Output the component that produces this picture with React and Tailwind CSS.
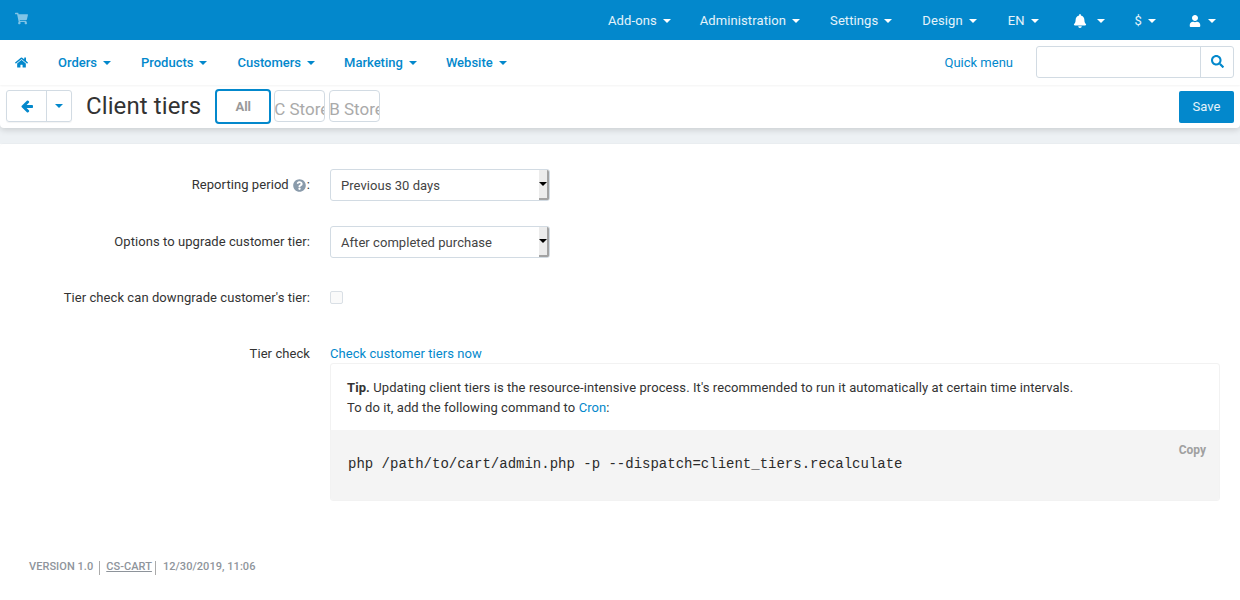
import React from "react";
import { FaShoppingCart, FaHome, FaBell, FaUser, FaSearch, FaQuestionCircle } from "react-icons/fa";

const Caret = ({ className = "" }) => (
  <span className={"inline-block w-0 h-0 border-x-[4px] border-x-transparent border-t-[4px] border-t-current " + className} />
);

const TopItem = ({ children, className = "" }) => (
  <span className={"flex items-center text-[13px] tracking-[0.1px] text-white/90 " + className}>{children}<Caret className="ml-[6px] text-white" /></span>
);

const NavItem = ({ children, className = "" }) => (
  <span className={"flex items-center text-[13px] font-medium text-[#0388cc] " + className}>{children}<Caret className="ml-[6px]" /></span>
);

const Select = ({ children }) => (
  <div className="w-[220px] h-[32px] border border-[#d2dbe3] rounded-[3px] bg-white flex items-center justify-between overflow-hidden">
    <span className="pl-[10px] pt-[1px] text-[13px] tracking-[0.05px] text-[#444]">{children}</span>
    <span className="w-[10px] h-full bg-[#ececec] border-r-2 border-b-2 border-[#a3a3a3] flex items-center justify-center">
      <Caret className="text-black border-x-[3px] border-t-[3px]" />
    </span>
  </div>
);

const Row = ({ label, children, className = "" }) => (
  <div className={"flex " + className}>
    <div className="w-[310px] text-right text-[13px] tracking-[0.07px] text-[#333] shrink-0">{label}</div>
    <div className="ml-[20px] flex-1">{children}</div>
  </div>
);

const ArrowLeft = () => (
  <svg viewBox="0 0 1792 1792" className="w-[14px] h-[14px] fill-[#0388cc]">
    <path d="M1664 896v128q0 53-32.5 90.5t-84.5 37.5h-704l293 294q38 36 38 90t-38 90l-75 76q-38 38-90 38-53 0-91-38l-651-652q-38-38-38-90 0-53 38-91l651-650q38-38 91-38 52 0 90 38l75 74q38 38 38 91t-38 91l-293 293h704q52 0 84.5 37.5t32.5 90.5z" />
  </svg>
);

export default function App() {
  return (
    <div className="w-[1240px] h-[600px] overflow-hidden bg-white text-[13px] text-[#333] font-['Roboto',sans-serif]">
      <header className="h-[40px] bg-[#0388cc] flex items-center pl-[15px] pr-[24px]">
        <FaShoppingCart className="text-white/50 text-[13px] -mt-[3px]" />
        <div className="ml-auto mt-[1px] flex items-center">
          <TopItem>Add-ons</TopItem>
          <TopItem className="ml-[29px]">Administration</TopItem>
          <TopItem className="ml-[30px]">Settings</TopItem>
          <TopItem className="ml-[30px]">Design</TopItem>
          <TopItem className="ml-[31px]">EN</TopItem>
          <TopItem className="ml-[34px]"><FaBell className="text-white text-[14px] mr-[4px]" /></TopItem>
          <TopItem className="ml-[30px]">$</TopItem>
          <TopItem className="ml-[33px]"><FaUser className="text-white text-[12px] mr-[1px]" /></TopItem>
        </div>
      </header>

      <nav className="h-[45px] bg-white flex items-center pl-[15px] pr-[6px] relative z-10 shadow-[0_1px_2px_rgba(0,0,0,0.05)]">
        <FaHome className="text-[#0388cc] text-[13px]" />
        <NavItem className="ml-[30px]">Orders</NavItem>
        <NavItem className="ml-[30px]">Products</NavItem>
        <NavItem className="ml-[30px]">Customers</NavItem>
        <NavItem className="ml-[29px]">Marketing</NavItem>
        <NavItem className="ml-[29px]">Website</NavItem>
        <span className="ml-auto text-[13px] text-[#0388cc]">Quick menu</span>
        <div className="ml-[23px] mb-[2px] w-[198px] h-[32px] border border-[#d2dbe3] rounded-[3px] flex justify-end">
          <span className="w-[33px] border-l border-[#d2dbe3] flex items-center justify-center">
            <FaSearch className="text-[#0388cc] text-[13px]" />
          </span>
        </div>
      </nav>

      <div className="bg-[#edf1f4] h-[59px]">
        <div className="h-[43px] bg-white rounded-b-[4px] shadow-[0_2px_6px_rgba(0,0,0,0.15)] flex items-start pl-[6px] pr-[6px] relative">
          <div className="mt-[5px] h-[32px] flex border border-[#d2dbe3] rounded-[3px] shadow-[0_1px_1px_rgba(0,0,0,0.05)]">
            <span className="w-[40px] border-r border-[#d2dbe3] flex items-center justify-center">
              <ArrowLeft />
            </span>
            <span className="w-[24px] flex items-center justify-center text-[#0388cc]"><Caret /></span>
          </div>
          <h1 className="ml-[14px] mt-[3px] text-[24px] tracking-[0.1px] leading-[36px] font-normal text-[#333]">Client tiers</h1>
          <div className="ml-[14px] mt-[4px] w-[56px] h-[35px] border-2 border-[#0388cc] rounded-[4px] flex items-center justify-center text-[13px] font-bold text-[#999]">All</div>
          <div className="ml-[3px] mt-[5px] w-[51px] h-[32px] border border-[#d2dbe3] rounded-[4px] overflow-hidden whitespace-nowrap indent-[-1px] text-[17px] leading-[36px] text-[#aaa]">C Store</div>
          <div className="ml-[4px] mt-[5px] w-[51px] h-[32px] border border-[#d2dbe3] rounded-[4px] overflow-hidden whitespace-nowrap indent-[-1px] text-[17px] leading-[36px] text-[#aaa]">B Store</div>
          <button className="ml-auto mt-[6px] w-[55px] h-[32px] bg-[#0388cc] rounded-[2px] text-white/90 text-[13px]">Save</button>
        </div>
      </div>

      <main className="bg-white rounded-t-[4px] shadow-[0_-1px_1px_rgba(0,0,0,0.02)] relative">
        <Row className="pt-[25px] leading-[32px]" label={<span className="inline-flex items-center h-[30px]">Reporting period<FaQuestionCircle className="text-[#8a9bab] text-[13px] ml-[4px] mr-[1px]" />:</span>}>
          <Select>Previous 30 days</Select>
        </Row>
        <Row className="mt-[25px]" label={<span className="inline-flex items-center h-[32px]">Options to upgrade customer tier:</span>}>
          <Select>After completed purchase</Select>
        </Row>
        <Row className="mt-[25px]" label={<span className="inline-flex items-center h-[30px]">Tier check can downgrade customer's tier:</span>}>
          <div className="mt-[8px] w-[13px] h-[13px] border border-[#d9dfe5] rounded-[2px] bg-[#fafafa]" />
        </Row>
        <Row className="mt-[31px]" label={<span className="block leading-[20px]">Tier check</span>}>
          <a className="block leading-[20px] tracking-[0.06px] text-[#0388cc]">Check customer tiers now</a>
          <div className="-mt-[1px] w-[890px] border border-[#f2f2f2] rounded-[3px] overflow-hidden">
            <div className="h-[66px] pl-[16px] pt-[14px] leading-[20px] text-[13px] tracking-[0.085px] text-[#333]">
              <div><b className="font-bold">Tip.</b> Updating client tiers is the resource-intensive process. It's recommended to run it automatically at certain time intervals.</div>
              <div>To do it, add the following command to <a className="text-[#0388cc]">Cron</a>:</div>
            </div>
            <div className="h-[70px] bg-[#f4f4f4] pl-[17px] pb-[2px] relative flex items-center">
              <span className="font-['Liberation_Mono',monospace] text-[14px] text-[#2b2b2b]">php /path/to/cart/admin.php -p --dispatch=client_tiers.recalculate</span>
              <span className="absolute right-[13px] top-[11px] text-[12px] font-bold text-[#a0a0a0]">Copy</span>
            </div>
          </div>
        </Row>
        <footer className="mt-[59px] ml-[29px] flex items-center text-[11px] font-medium tracking-[0.05px] text-[#8e949b] h-[15px]">
          <span>VERSION 1.0</span>
          <span className="mx-[6px] w-px h-[14px] bg-[#aaa]" />
          <span className="underline">CS-CART</span>
          <span className="ml-[3px] mr-[7px] w-px h-[14px] bg-[#aaa]" />
          <span>12/30/2019, 11:06</span>
        </footer>
      </main>
    </div>
  );
}
